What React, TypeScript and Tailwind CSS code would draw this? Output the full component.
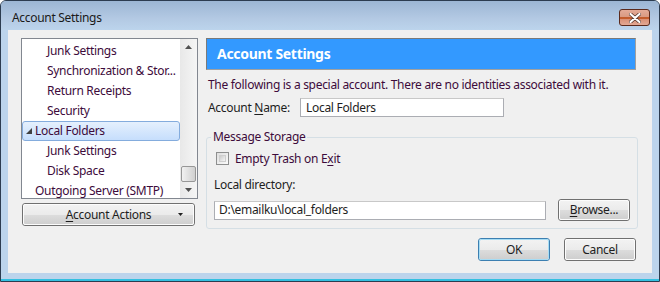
import React from "react";

const purple = "text-[#3d0b3b]";

function TreeRow({ label, indent, selected, arrow }: { label: string; indent: number; selected?: boolean; arrow?: boolean }) {
  return (
    <div className="relative h-[20px] flex items-center">
      {selected && (
        <div className="absolute left-0 right-0 top-0 bottom-0 rounded-[3px] border border-[#84acdd] bg-gradient-to-b from-[#e5f0fd] to-[#c6defc]" />
      )}
      {arrow && (
        <svg className="absolute left-[4px] top-[7px]" width="7" height="7" viewBox="0 0 7 7">
          <polygon points="6,0 6,6 0,6" fill="#404040" />
        </svg>
      )}
      <span className={`relative whitespace-nowrap ${purple}`} style={{ paddingLeft: indent }}>
        {label}
      </span>
    </div>
  );
}

function WinButton({ children, className = "", def }: { children: React.ReactNode; className?: string; def?: boolean }) {
  return (
    <div
      className={`flex items-center justify-center rounded-[3px] border ${def ? "border-[#3c7fb1]" : "border-[#707070]"} ${className}`}
    >
      <div
        className={`w-full h-full rounded-[2px] border ${def ? "border-[#a6dcf4]" : "border-[#fcfcfc]"} flex items-center justify-center bg-[linear-gradient(to_bottom,#f2f2f2_0%,#ebebeb_50%,#dddddd_51%,#cfcfcf_100%)]`}
      >
        {children}
      </div>
    </div>
  );
}

export default function App() {
  return (
    <div className="w-[660px] h-[282px] font-[family-name:'Segoe_UI','Noto_Sans',sans-serif] text-[12px] tracking-[-0.3px] leading-none text-[#1e1e1e] bg-white">
      <div className="w-[660px] h-[282px] border border-[#2c3c50] rounded-t-[6px] bg-[#bcd4ec] flex flex-col overflow-hidden">
        {/* title bar */}
        <div className="h-[29px] shrink-0 flex items-center justify-between pl-[11px] pr-[9px] pt-[4px] bg-[linear-gradient(to_bottom,#9cb6d4,#b3c9e3_60%,#bcd4ec)]">
          <span className="text-[12px] text-[#1a1a1a] mt-[1px]">Account Settings</span>
          <div className="w-[31px] h-[17px] rounded-[3px] border border-[#5b2a1c] bg-[linear-gradient(to_bottom,#e4ab97_0%,#d99a82_45%,#c05b2c_46%,#c55c2c_58%,#d88f75_60%,#e3a894_100%)] flex items-center justify-center">
            <svg width="12" height="10" viewBox="0 0 12 10">
              <path d="M1.5 1 L10.5 9 M10.5 1 L1.5 9" stroke="#5a3a30" strokeWidth="3.6" strokeLinecap="round" />
              <path d="M1.5 1 L10.5 9 M10.5 1 L1.5 9" stroke="#ffffff" strokeWidth="2.2" strokeLinecap="round" />
            </svg>
          </div>
        </div>
        {/* client */}
        <div className="mx-[7px] h-[243px] bg-[#f0f0f0] flex pl-[13px] pt-[8px] pr-[14px]">
          {/* left column */}
          <div className="w-[177px] flex flex-col">
            <div className="h-[161px] border border-[#828790] bg-white flex overflow-hidden">
              <div className="flex-1 pt-[2px]">
                <TreeRow label="Junk Settings" indent={25} />
                <TreeRow label="Synchronization & Stor..." indent={25} />
                <TreeRow label="Return Receipts" indent={25} />
                <TreeRow label="Security" indent={25} />
                <TreeRow label="Local Folders" indent={13} selected arrow />
                <TreeRow label="Junk Settings" indent={25} />
                <TreeRow label="Disk Space" indent={25} />
                <TreeRow label="Outgoing Server (SMTP)" indent={13} />
              </div>
              {/* scrollbar */}
              <div className="w-[17px] bg-[linear-gradient(to_right,#e8e8e8,#f5f5f5)] flex flex-col items-center relative">
                <svg className="mt-[6px]" width="7" height="4" viewBox="0 0 7 4">
                  <polygon points="3.5,0 7,4 0,4" fill="#505050" />
                </svg>
                <div className="absolute left-[1px] top-[127px] w-[15px] h-[16px] rounded-[2px] border border-[#979797] bg-[linear-gradient(to_right,#f1f1f1,#e0e0e0_50%,#d0d0d0)]" />
                <svg className="absolute left-[5px] top-[149px]" width="7" height="4" viewBox="0 0 7 4">
                  <polygon points="0,0 7,0 3.5,4" fill="#505050" />
                </svg>
              </div>
            </div>
            <WinButton className="mt-[4px] ml-[1px] w-[173px] h-[23px]">
              <div className="relative w-full flex justify-center items-center">
                <span className="text-[#1e1e1e]">
                  <span className="underline underline-offset-2">A</span>ccount Actions
                </span>
                <svg className="absolute right-[10px] top-[4px]" width="5" height="3" viewBox="0 0 5 3">
                  <polygon points="0,0 5,0 2.5,3" fill="#202020" />
                </svg>
              </div>
            </WinButton>
          </div>
          {/* right panel */}
          <div className="ml-[8px] flex-1 flex flex-col">
            <div className="mr-[2px] h-[32px] border border-t-[#7a7a7a] border-l-[#7a7a7a] border-b-[#a0a0a0] border-r-[#a0a0a0] bg-[#3399ff] flex items-center pl-[10px]">
              <span className="text-white font-bold text-[14px] leading-none">Account Settings</span>
            </div>
            <div className={`mt-[9px] ml-[2px] ${purple} whitespace-nowrap`}>
              The following is a special account. There are no identities associated with it.
            </div>
            <div className="mt-[7px] flex items-center">
              <span className="ml-[2px] w-[92px] text-[#1e1e1e]">
                Account <span className="underline underline-offset-2">N</span>ame:
              </span>
              <div className="w-[204px] h-[19px] border border-[#abadb3] border-t-[#c8c8c8] bg-white flex items-center pl-[5px] text-[#1e1e1e]">
                Local Folders
              </div>
            </div>
            <div className="mt-[20px] relative h-[92px] rounded-[3px] border border-[#d5dfe5] pt-[14px] pl-[9px]">
              <span className={`absolute left-[4px] top-[-7px] px-[2px] bg-[#f0f0f0] ${purple}`}>Message Storage</span>
              <div className="flex items-center">
                <div className="w-[13px] h-[13px] border border-[#8e8f8f] bg-[linear-gradient(135deg,#dedede,#fbfbfb)] p-[2px]">
                  <div className="w-full h-full border border-[#cfcfcf] bg-[linear-gradient(135deg,#cbcbcb,#f6f6f6)]" />
                </div>
                <span className={`ml-[6px] ${purple}`}>
                  Empty Trash on E<span className="underline underline-offset-2">x</span>it
                </span>
              </div>
              <div className="mt-[14px] -ml-[2px] text-[#1e1e1e]">Local directory:</div>
              <div className="mt-[8px] -ml-[2px] flex items-center">
                <div className="w-[332px] h-[19px] border border-[#abadb3] border-t-[#c8c8c8] bg-white flex items-center pl-[4px] text-[#1e1e1e]">
                  D:\emailku\local_folders
                </div>
                <WinButton className="ml-[12px] w-[72px] h-[22px]">
                  <span className="text-[#1e1e1e]">
                    <span className="underline underline-offset-2">B</span>rowse...
                  </span>
                </WinButton>
              </div>
            </div>
            <div className="mt-[9px] flex justify-end pr-[2px] gap-[14px]">
              <WinButton def className="w-[72px] h-[23px]">
                <span className="text-[#1e1e1e]">OK</span>
              </WinButton>
              <WinButton className="w-[72px] h-[23px]">
                <span className="text-[#1e1e1e]">Cancel</span>
              </WinButton>
            </div>
          </div>
        </div>
        <div className="flex-1 border-b-2 border-b-[#34c0e0]" />
      </div>
    </div>
  );
}
